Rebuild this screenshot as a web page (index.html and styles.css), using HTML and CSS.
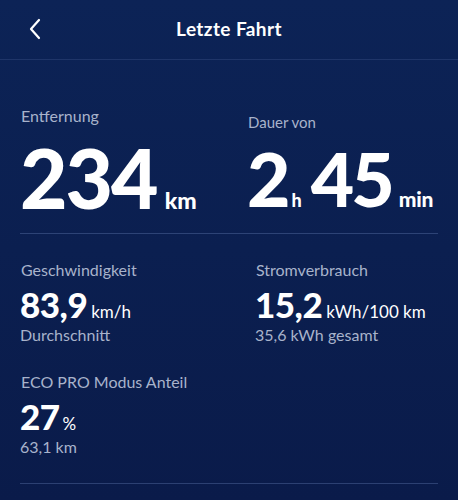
FILE: index.html
```html
<!DOCTYPE html>
<html lang="de">
<head>
<meta charset="utf-8">
<link rel="stylesheet" href="styles.css">
</head>
<body>
<div class="screen">
  <header class="topbar">
    <span class="back">
      <svg width="14" height="22" viewBox="0 0 14 22"><path d="M11 2 L3 11 L11 20" fill="none" stroke="#fff" stroke-width="2.2" stroke-linecap="round" stroke-linejoin="round"/></svg>
    </span>
    <h1 class="title">Letzte Fahrt</h1>
  </header>
  <main class="content">
    <section class="hero">
      <div class="stat">
        <div class="label">Entfernung</div>
        <div class="big"><span class="num">234</span><span class="unit">km</span></div>
      </div>
      <div class="stat right">
        <div class="label small">Dauer von</div>
        <div class="big"><span class="num">2</span><span class="unit h">h</span><span class="num">45</span><span class="unit min">min</span></div>
      </div>
    </section>
    <hr class="divider">
    <section class="grid">
      <div class="stat">
        <div class="label">Geschwindigkeit</div>
        <div class="mid"><span class="val">83,9</span><span class="u">km/h</span></div>
        <div class="sub">Durchschnitt</div>
      </div>
      <div class="stat">
        <div class="label">Stromverbrauch</div>
        <div class="mid"><span class="val">15,2</span><span class="u">kWh/100 km</span></div>
        <div class="sub">35,6 kWh gesamt</div>
      </div>
      <div class="stat">
        <div class="label">ECO PRO Modus Anteil</div>
        <div class="mid"><span class="val">27</span><span class="u pct">%</span></div>
        <div class="sub">63,1 km</div>
      </div>
    </section>
    <hr class="divider last">
  </main>
</div>
</body>
</html>
```
FILE: styles.css
```css
* { box-sizing: border-box; }
html, body { margin: 0; padding: 0; }
body {
  width: 458px;
  height: 500px;
  overflow: hidden;
  background: linear-gradient(180deg, #0c2356 0%, #0b1f50 50%, #0a1b4a 100%);
  font-family: Lato, "Noto Sans", sans-serif;
  color: #fff;
}
.screen { height: 500px; }
.topbar {
  position: relative;
  height: 60px;
  display: flex;
  align-items: center;
  justify-content: center;
  border-bottom: 1px solid rgba(120, 145, 200, 0.18);
}
.back {
  position: absolute;
  left: 28px;
  top: 18px;
  display: flex;
}
.title {
  margin: 0;
  font-size: 19px;
  font-weight: 700;
  letter-spacing: 0.4px;
  padding-bottom: 2px;
}
.content { padding: 0 20px; }
.hero {
  display: grid;
  grid-template-columns: 227px 1fr;
  padding-top: 46px;
}
.label {
  font-size: 16px;
  color: #a8b3cb;
  line-height: 20px;
  padding-left: 1px;
}
.label.small { font-size: 15px; padding-top: 7px; line-height: 18px; }
.big {
  display: flex;
  align-items: baseline;
  margin-top: 3px;
  height: 100px;
  line-height: 96px;
}
.big .num {
  font-size: 82px;
  font-weight: 900;
  letter-spacing: -2px;
}
.big .unit {
  font-size: 23px;
  font-weight: 900;
  margin-left: 8px;
}
.right .big {
  margin-top: 0;
  line-height: 94px;
}
.right .big .num {
  font-size: 75px;
  letter-spacing: -3px;
}
.big .unit.h { font-size: 18px; margin-left: 4px; margin-right: 9px; }
.big .unit.min { font-size: 21px; margin-left: 7px; letter-spacing: -0.2px; }
.divider {
  border: 0;
  height: 1px;
  background: rgba(110, 135, 190, 0.35);
  margin: 0;
}
.hero + .divider { margin-top: 2px; }
.grid {
  display: grid;
  grid-template-columns: 235px 1fr;
  row-gap: 27px;
  padding-top: 26px;
  padding-bottom: 26px;
}
.mid {
  display: flex;
  align-items: baseline;
  margin-top: 6px;
  line-height: 36px;
}
.val { font-size: 35px; font-weight: 900; letter-spacing: -0.5px; }
.u { font-size: 17px; margin-left: 4px; }
.u.pct { margin-left: 3px; }
.sub {
  font-size: 16px;
  color: #a8b3cb;
  line-height: 20px;
  margin-top: -5px;
}
```
